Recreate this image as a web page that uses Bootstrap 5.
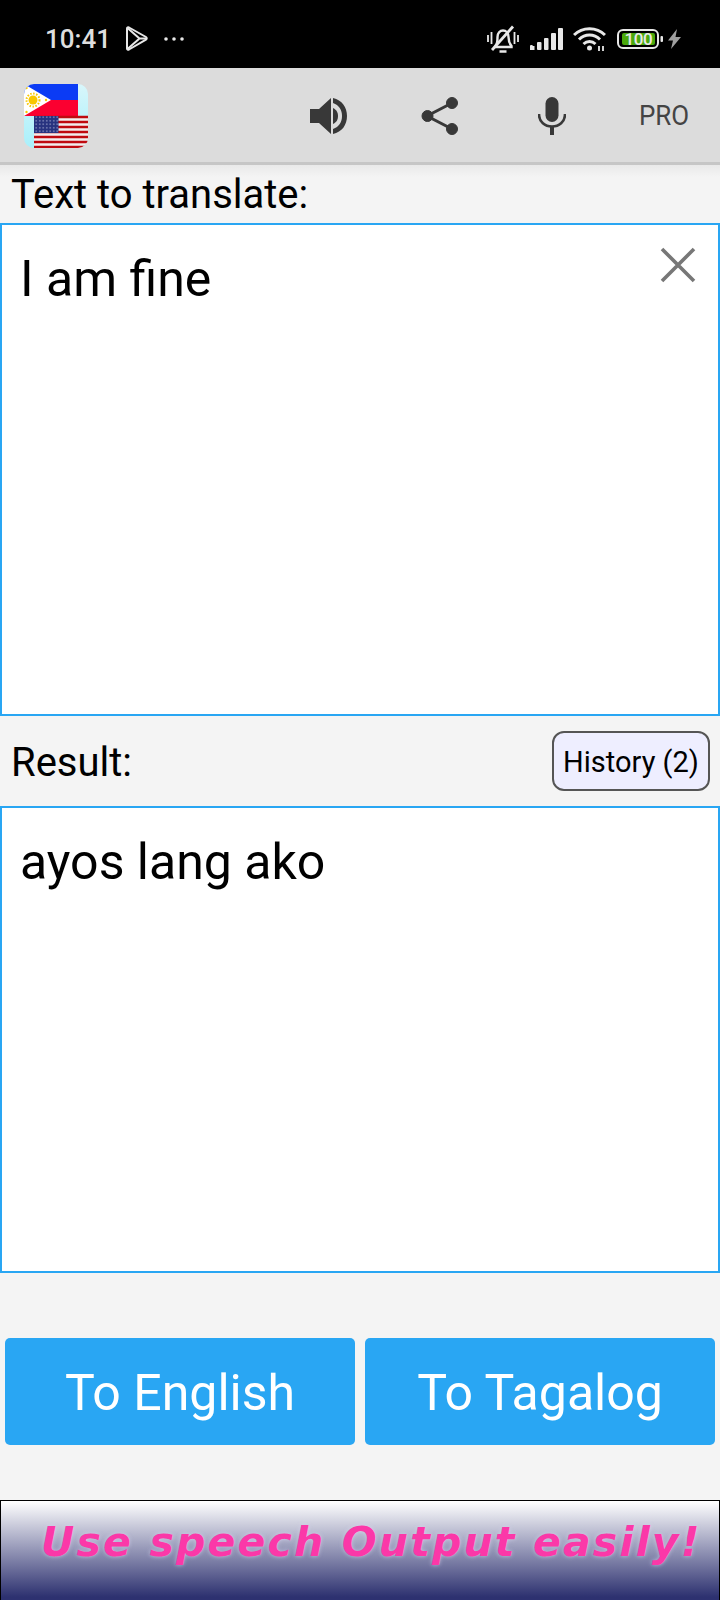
<!DOCTYPE html>
<html lang="en">
<head>
  <meta charset="UTF-8" />
  <meta name="viewport" content="width=device-width, initial-scale=1.0"/>
  <title>Tagalog Translator</title>
  <link href="https://cdn.jsdelivr.net/npm/bootstrap@5.3.2/dist/css/bootstrap.min.css" rel="stylesheet" />
  <style>
    html, body { height: 100%; margin: 0; overflow: hidden; }
    body { font-family: Roboto, "Liberation Sans", sans-serif; background: #f4f4f4; color: #000; }

    .app-screen { width: 720px; height: 1600px; }

    /* Status bar */
    .status-strip { height: 68px; background: #000; color: #dedede; padding: 10px 39px 0 45px; }
    .status-time { font-size: 26px; font-weight: 500; line-height: 1; margin-right: 14px; }
    .status-dots { margin-left: 15px; }

    /* Toolbar */
    .tool-strip { height: 97px; background: #dcdcdc; border-bottom: 3px solid #c6c6c6; position: relative; }
    .tool-logo { position: absolute; left: 24px; top: 16px; width: 64px; height: 64px; }
    .tool-btn { position: absolute; top: 0; height: 97px; display: flex; align-items: center; justify-content: center; color: #383838; }
    .tool-speak { left: 299px; width: 60px; }
    .tool-share { left: 410px; width: 60px; }
    .tool-mic { left: 522px; width: 60px; }
    .tool-pro { left: 629px; width: 70px; font-size: 27px; color: #444; transform: scaleX(.96); }

    .field-label { font-size: 40px; line-height: 1; color: #000; padding-left: 11px; }
    .label-top { height: 58px; padding-top: 10px; background: linear-gradient(#e9e9e9, #f4f4f4 12px); }

    .text-box { width: 720px; background: #fff; border: 2px solid #29a6f3; padding: 26px 18px; font-size: 50px; line-height: 56px; color: #000; position: relative; }
    .box-source { height: 494px; }
    .box-result { height: 467px; }
    .clear-x { position: absolute; right: 22px; top: 22px; }

    .result-row { height: 90px; padding-right: 10px; }
    .result-row .field-label { padding-top: 4px; }
    .history-btn { width: 158px; height: 60px; background: #eeeeff; border: 2px solid #555; border-radius: 12px; font-size: 29px; line-height: 1; color: #000; padding: 2px 0 0; }

    .action-row { padding: 65px 5px 0; gap: 10px; }
    .action-btn { width: 350px; height: 107px; background: #29a6f3; border: 0; border-radius: 5px; color: #fff; font-size: 50px; line-height: 1; padding: 2px 0 0; }
    .action-btn:hover { background: #29a6f3; color: #fff; }

    .ad-banner { margin-top: 55px; height: 100px; border: 1px solid #000; border-bottom: 0; background: linear-gradient(#fff 0%, #2d3170 97%); overflow: hidden; }
    .ad-text { font-family: "DejaVu Sans", sans-serif; font-weight: 700; font-style: italic; font-size: 41px; line-height: 1; letter-spacing: 2.170px; color: #fb38a8; white-space: nowrap; padding: 21px 0 0 40px; text-shadow: 0 0 4px rgba(215,215,245,.7); }
  </style>
</head>
<body>
<div class="app-screen d-flex flex-column">

  <!-- Status bar -->
  <div class="status-strip d-flex align-items-center justify-content-between">
    <div class="d-flex align-items-center">
      <span class="status-time">10:41</span>
      <svg width="23" height="25" viewBox="0 0 23 25" fill="none" stroke="#e8e8e8" stroke-width="2" stroke-linejoin="round">
        <path d="M2 2.500C2 1.500 3 1 4 1.500L21 11c1 .6 1 2 0 2.600L4 23.500c-1 .5-2 0-2-1z"/>
        <path d="M2.500 2 14.500 12.500 2.500 23M14.500 12.500 21 12.500"/>
      </svg>
      <svg class="status-dots" width="22" height="6" viewBox="0 0 22 6" fill="#e8e8e8">
        <circle cx="3" cy="3" r="1.800"/><circle cx="11" cy="3" r="1.800"/><circle cx="19" cy="3" r="1.800"/>
      </svg>
    </div>
    <div class="d-flex align-items-center">
      <svg width="32" height="28" viewBox="0 0 32 28" fill="none" stroke="#e8e8e8" stroke-width="2.400">
        <path d="M9 20c1.500-2 1.500-4 1.500-8 0-4 2.500-6.500 5.500-6.500s5.500 2.500 5.500 6.500c0 4 .5 6 3 9v1H8z"/>
        <path d="M12.500 26.500h7" stroke-width="2.500"/>
        <path d="M5 25 26 1.500" stroke-width="2.800"/>
        <path d="M1 10v7M4.500 7v12M27.500 7v12M31 10v7" stroke-width="1.800"/>
      </svg>
      <svg class="signal-icon" style="margin-left:11px" width="33" height="22" viewBox="0 0 33 22" fill="#e8e8e8">
        <path d="M0 19a1.500 1.500 0 0 1 3-1h1.500v4H0z"/>
        <rect x="7" y="14" width="4.500" height="8" rx="1"/>
        <rect x="14" y="10" width="4.500" height="12" rx="1"/>
        <rect x="21" y="5" width="5" height="17" rx="1"/>
        <rect x="28" y="0" width="5" height="22" rx="1"/>
      </svg>
      <svg style="margin-left:10px" width="33" height="25" viewBox="0 0 33 25" fill="none" stroke="#e8e8e8" stroke-width="3">
        <path d="M1 9C9.500 0.500 23.500 0.500 32 9"/>
        <path d="M6 13.500c6-6 15-6 21 0"/>
        <path d="M10.500 18c3.500-3.200 8.500-3.200 12 0"/>
        <circle cx="16.500" cy="22" r="2.500" fill="#e8e8e8" stroke="none"/>
        <path d="M26 20v5M30 20v5" stroke-width="1.800"/>
      </svg>
      <svg style="margin-left:11px" width="46" height="20" viewBox="0 0 46 20" fill="none">
        <rect x="1" y="1" width="40" height="18" rx="5" stroke="#e8e8e8" stroke-width="2"/>
        <rect x="5" y="4" width="33" height="12" rx="2" fill="#4aa80c"/>
        <text x="21.500" y="16" text-anchor="middle" font-family="Roboto, sans-serif" font-size="17" letter-spacing="-.4" font-weight="500" fill="#e8e8e8">100</text>
        <rect x="43.500" y="7" width="2.500" height="6" rx="1" fill="#e8e8e8"/>
      </svg>
      <svg style="margin-left:5px" width="13" height="20" viewBox="0 0 13 20" fill="#a0a0a0">
        <path d="M9 0 0 11.500h5L3 20l10-12H7.500z"/>
      </svg>
    </div>
  </div>

  <!-- Toolbar -->
  <div class="tool-strip">
    <svg class="tool-logo" viewBox="0 0 64 64">
      <defs>
        <clipPath id="logoClip"><rect width="64" height="64" rx="10"/></clipPath>
        <pattern id="starDots" width="3.500" height="3.500" patternUnits="userSpaceOnUse">
          <rect width="3.500" height="3.500" fill="#27327f"/><circle cx="1.750" cy="1.750" r=".65" fill="#c9cde8"/>
        </pattern>
        <linearGradient id="logoSide" x1="0" y1="0" x2="0" y2="1">
          <stop offset="0" stop-color="#d8f6fb"/><stop offset="1" stop-color="#a8f0fb"/>
        </linearGradient>
      </defs>
      <g clip-path="url(#logoClip)">
        <rect width="64" height="64" fill="url(#logoSide)"/>
        <rect width="54" height="16" fill="#0b3bf5"/>
        <rect y="16" width="54" height="16" fill="#fb0030"/>
        <path d="M0 0 27 16 0 32z" fill="#fff"/>
        <circle cx="9" cy="16" r="4.500" fill="#f8c800"/>
        <circle cx="9" cy="16" r="6.500" fill="none" stroke="#f8c800" stroke-width="2" stroke-dasharray="1.500 1.500"/>
        <circle cx="2.500" cy="4" r="1.200" fill="#f8c800"/><circle cx="2.500" cy="28" r="1.200" fill="#f8c800"/><circle cx="22" cy="16" r="1.200" fill="#f8c800"/>
        <rect x="10" y="32" width="54" height="32" fill="#f2eeee"/>
        <path d="M10 33h54M10 38h54M10 43h54M10 48h54M10 53h54M10 58h54M10 63h54" stroke="#bf0a10" stroke-width="2.500"/>
        <rect x="10" y="32" width="24.500" height="17" fill="url(#starDots)"/>
      </g>
    </svg>
    <div class="tool-btn tool-speak">
      <svg width="38" height="36" viewBox="0 0 38 36" fill="#383838">
        <path d="M0 11h9L21 0v36L9 25H0z"/>
        <path d="M23 10c4 2 5 5 5 8s-1 6-5 8z"/>
        <path d="M23 0c9 2 14 9 14 18s-5 16-14 18v-5c6-2 9-7 9-13s-3-11-9-13z"/>
      </svg>
    </div>
    <div class="tool-btn tool-share">
      <svg width="38" height="40" viewBox="0 0 38 40" fill="#383838" stroke="#383838">
        <circle cx="31" cy="7" r="5.500"/><circle cx="6.500" cy="20" r="5.500"/><circle cx="31" cy="33" r="5.500"/>
        <path d="M31 7 6 20 31 33" fill="none" stroke-width="3"/>
      </svg>
    </div>
    <div class="tool-btn tool-mic">
      <svg width="28" height="38" viewBox="0 0 28 38" fill="#383838">
        <rect x="7.500" y="0" width="13" height="25" rx="6.500"/>
        <path d="M1 17c0 8 6 12.500 13 12.500S27 25 27 17" fill="none" stroke="#383838" stroke-width="2.600"/>
        <rect x="12" y="29" width="4" height="9"/>
      </svg>
    </div>
    <div class="tool-btn tool-pro">PRO</div>
  </div>

  <div class="field-label label-top">Text to translate:</div>
  <div class="text-box box-source">
    I am fine
    <svg class="clear-x" width="36" height="36" viewBox="0 0 36 36" stroke="#777" stroke-width="3.600">
      <path d="M2 2 34 34M34 2 2 34"/>
    </svg>
  </div>

  <div class="result-row d-flex align-items-center justify-content-between">
    <span class="field-label">Result:</span>
    <button type="button" class="btn history-btn">History (2)</button>
  </div>
  <div class="text-box box-result">ayos lang ako</div>

  <div class="action-row d-flex">
    <button type="button" class="btn action-btn">To English</button>
    <button type="button" class="btn action-btn">To Tagalog</button>
  </div>

  <div class="ad-banner">
    <div class="ad-text">Use speech Output easily!</div>
  </div>
</div>

<script src="https://cdn.jsdelivr.net/npm/bootstrap@5.3.2/dist/js/bootstrap.bundle.min.js"></script>
</body>
</html>
